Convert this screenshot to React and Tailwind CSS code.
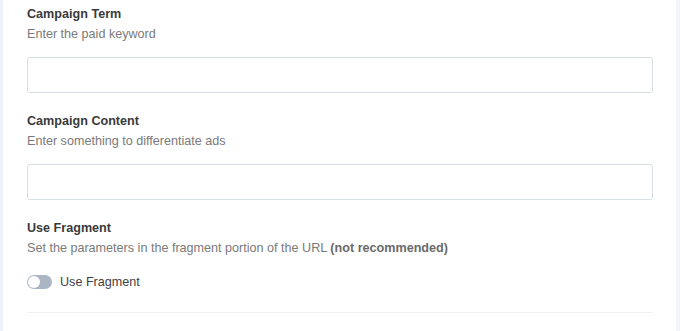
const Field = ({ title, desc }) => {
  return (
    <div>
      <h3 className="text-[12.6px] leading-5 font-bold text-[#3a3a3a]">{title}</h3>
      <p className="text-[12.6px] leading-5 text-[#7a7a7a]">{desc}</p>
      <input
        type="text"
        className="mt-[13px] block w-full h-9 border border-[#d7dde5] rounded-[3px] bg-white px-3 outline-none"
      />
    </div>
  );
};

const App = () => {
  return (
    <div
      className="w-[680px] h-[331px] flex bg-[#f1f4fb] overflow-hidden"
      style={{ fontFamily: '"Liberation Sans", Arial, sans-serif' }}
    >
      <div className="w-[3px] shrink-0 bg-[#eef2fb]"></div>
      <div className="w-[673px] shrink-0 bg-white pt-[4px] pl-[24px] pr-[23px]">
        <div className="flex flex-col gap-[18px]">
          <Field title="Campaign Term" desc="Enter the paid keyword" />
          <Field title="Campaign Content" desc="Enter something to differentiate ads" />
          <div>
            <h3 className="text-[12.6px] leading-5 font-bold text-[#3a3a3a]">Use Fragment</h3>
            <p className="text-[12.6px] leading-5 text-[#7a7a7a]">
              Set the parameters in the fragment portion of the URL{" "}
              <span className="font-bold text-[#6a6a6a]">(not recommended)</span>
            </p>
            <label className="mt-[14px] flex items-center gap-2">
              <span className="relative w-[25px] h-[14px] rounded-full bg-[#aab6c3]">
                <span className="absolute left-[1px] top-[1px] w-3 h-3 rounded-full bg-white"></span>
              </span>
              <span className="text-[12.6px] leading-5 text-[#3f3f3f]">Use Fragment</span>
            </label>
          </div>
        </div>
        <div className="mt-[20px] h-px bg-[#eef0f3]"></div>
      </div>
    </div>
  );
};

export default App;
